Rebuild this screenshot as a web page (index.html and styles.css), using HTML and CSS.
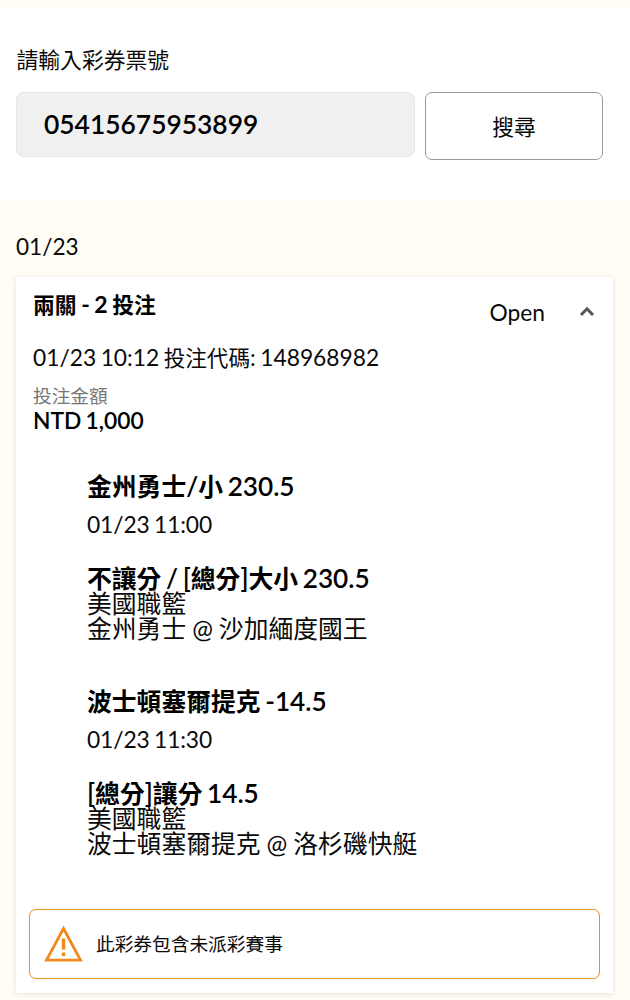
FILE: index.html
```html
<!DOCTYPE html>
<html lang="zh-Hant">
<head>
<meta charset="utf-8">
<title>彩券查詢</title>
<link rel="stylesheet" href="styles.css">
</head>
<body>
<section class="search">
  <div class="search-label"><span>請輸入彩券票號</span></div>
  <div class="search-row">
    <div class="ticket-input"><span>05415675953899</span></div>
    <button class="search-button"><span>搜尋</span></button>
  </div>
</section>
<main class="results">
  <div class="group-date"><span>01/23</span></div>
  <article class="card">
    <header class="card-header">
      <div class="card-title">兩關<span class="latin"> - 2 </span>投注</div>
      <div class="card-status">
        <span>Open</span>
        <svg class="chevron" viewBox="0 0 16 12" width="16" height="12"><path d="M2 9 8 2.8l6 6.2" fill="none" stroke="#555" stroke-width="3"/></svg>
      </div>
    </header>
    <div class="bet-code"><span class="latin">01/23 10:12 </span>投注代碼<span class="latin">: 148968982</span></div>
    <div class="stake-label"><span>投注金額</span></div>
    <div class="stake"><span>NTD 1,000</span></div>
    <div class="legs">
      <section class="leg">
        <div class="leg-pick">金州勇士<span class="latin">/</span>小<span class="latin"> 230.5</span></div>
        <div class="leg-time"><span>01/23 11:00</span></div>
        <div class="leg-market">不讓分<span class="latin"> / [</span>總分<span class="latin">]</span>大小<span class="latin"> 230.5</span></div>
        <div class="leg-line"><span>美國職籃</span></div>
        <div class="leg-line">金州勇士<span class="latin"> @ </span>沙加緬度國王</div>
      </section>
      <section class="leg">
        <div class="leg-pick">波士頓塞爾提克<span class="latin"> -14.5</span></div>
        <div class="leg-time"><span>01/23 11:30</span></div>
        <div class="leg-market"><span class="latin">[</span>總分<span class="latin">]</span>讓分<span class="latin"> 14.5</span></div>
        <div class="leg-line"><span>美國職籃</span></div>
        <div class="leg-line">波士頓塞爾提克<span class="latin"> @ </span>洛杉磯快艇</div>
      </section>
    </div>
    <div class="notice">
      <svg class="warning" viewBox="0 0 40 38" width="40" height="38"><path d="M20.5 3.5 37.5 35.2h-34Z" fill="none" stroke="#f08a1c" stroke-width="2.8"/><path d="M20.5 13.5v11M20.5 27.5v3.4" stroke="#f08a1c" stroke-width="3.4"/></svg>
      <span class="notice-text">此彩券包含未派彩賽事</span>
    </div>
  </article>
</main>
</body>
</html>
```
FILE: styles.css
```css
* { box-sizing: border-box; }
body {
  margin: 0;
  height: 1000px;
  overflow: hidden;
  padding-top: 9px;
  background: #fffdf4;
  color: #0a0a0a;
  font-family: Lato, "Noto Sans CJK TC", sans-serif;
  white-space: nowrap;
}
.latin { font-size: 1.055em; line-height: 1; word-spacing: -1.9px; }
.search { height: 191px; padding: 36px 27px 0 16px; background: #fff; }
.search-label { height: 47px; padding-left: .5px; font-size: 21.8px; line-height: 30px; }
.search-row { display: flex; gap: 10px; align-items: flex-start; }
.ticket-input {
  width: 399px; height: 65px; padding-left: 27px;
  border: 1px solid #e4e4e4; border-radius: 8px;
  background: #f0f0f0; color: #000;
  font-size: 26.4px; font-weight: 600; line-height: 63px;
}
.search-button {
  width: 178px; height: 68px; padding: 1px 0 0;
  border: 1px solid #999; border-radius: 7px;
  background: #fff; color: #0a0a0a;
  font-family: inherit; font-size: 21.8px; line-height: 30px;
}
.results { padding: 32px 17px 0 16px; }
.group-date { height: 45px; font-size: 22.6px; line-height: 30px; }
.card {
  height: 716px; padding: 13px 13px 0 17px;
  background: #fff; box-shadow: 0 1px 5px rgba(80, 70, 30, .14);
}
.card-header { display: flex; justify-content: space-between; height: 53px; }
.card-title { font-size: 21.8px; font-weight: 700; line-height: 30px; color: #000; }
.card-title .latin { word-spacing: -1px; }
.card-status { display: flex; align-items: center; gap: 34px; height: 44px; padding-right: 5px; font-size: 22.8px; }
.bet-code { height: 38px; font-size: 21.6px; line-height: 30px; }
.bet-code .latin { word-spacing: -1.3px; }
.stake-label { height: 24px; font-size: 18.7px; line-height: 30px; color: #777; }
.stake { height: 30px; font-size: 22.8px; font-weight: 600; line-height: 30px; color: #000; word-spacing: -1.5px; }
.legs { padding: 37px 0 0 54px; }
.leg { height: 215px; }
.leg-pick { height: 37px; font-size: 24.8px; font-weight: 600; line-height: 30px; color: #000; }
.leg-time { height: 55px; font-size: 22.8px; line-height: 30px; letter-spacing: -.1px; word-spacing: -1.4px; }
.leg-market { height: 25px; font-size: 24.8px; font-weight: 600; line-height: 30px; color: #000; }
.leg-line { height: 25px; font-size: 24.8px; line-height: 30px; }
.leg-line .latin { font-size: 1em; word-spacing: -.4px; }
.notice {
  display: flex; align-items: center; gap: 13px;
  width: 571px; height: 70px; margin: 7px 0 0 -4px; padding-left: 13px;
  border: 1px solid #e6942f; border-radius: 7px;
  font-size: 18.7px; box-shadow: 0 0 1px #f0c793;
}
.notice-text { padding-bottom: 3px; }
```
